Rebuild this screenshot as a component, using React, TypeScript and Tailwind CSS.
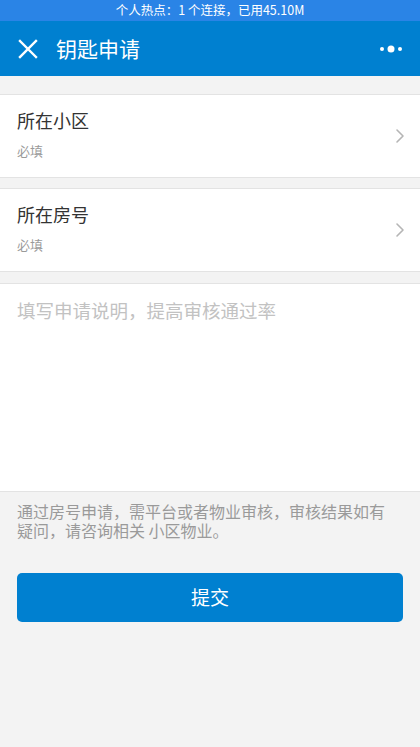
import React from 'react';

const font = '"Noto Sans CJK SC", Roboto, "Liberation Sans", sans-serif';

const Chevron = () => (
  <svg width="10" height="16" viewBox="0 0 10 16" fill="none">
    <path d="M2 2l6 6-6 6" stroke="#b5b5b5" strokeWidth="1.6" strokeLinecap="round" strokeLinejoin="round" />
  </svg>
);

const PickRow = ({ title }: { title: string }) => (
  <div className="flex items-center bg-white border-y border-[#e3e3e3] h-[84px] pl-[17px] pr-[15px]">
    <div className="flex-1 -mt-[4px]">
      <div className="text-[18px] leading-[24px] text-[#333]">{title}</div>
      <div className="mt-[10px] text-[13px] leading-[18px] text-[#9a9a9a]">必填</div>
    </div>
    <Chevron />
  </div>
);

export default function App() {
  return (
    <div className="w-[420px] h-[747px] bg-[#f3f3f3] flex flex-col" style={{ fontFamily: font }}>
      {/* status bar */}
      <div className="h-[21px] bg-[#2a84e6] flex items-center justify-center text-white text-[12.5px]">
        个人热点：1 个连接，已用45.10M
      </div>

      {/* header */}
      <div className="h-[55px] bg-[#0080d0] flex items-center pl-[18px] pr-[17px] text-white">
        <svg width="20" height="20" viewBox="0 0 20 20">
          <path d="M2 2l16 16M18 2L2 18" stroke="white" strokeWidth="2.4" strokeLinecap="square" />
        </svg>
        <div className="ml-[18px] text-[21px] flex-1">钥匙申请</div>
        <svg width="24" height="10" viewBox="0 0 24 10">
          <circle cx="3" cy="5" r="2" fill="white" />
          <circle cx="12" cy="5" r="3.5" fill="white" />
          <circle cx="21" cy="5" r="2" fill="white" />
        </svg>
      </div>

      <div className="mt-[18px]">
        <PickRow title="所在小区" />
      </div>
      <div className="mt-[10px]">
        <PickRow title="所在房号" />
      </div>

      {/* textarea */}
      <div className="mt-[11px] bg-white border-y border-[#e3e3e3] h-[209px] px-[17px] pt-[13px]">
        <textarea
          className="w-full h-full resize-none outline-none text-[18.5px] leading-[27px] text-[#333] placeholder:text-[#c2c2c2]"
          placeholder="填写申请说明，提高审核通过率"
          style={{ fontFamily: font }}
        />
      </div>

      <p className="pl-[17px] pr-[22px] pt-[10px] text-[16px] leading-[19px] text-[#9a9a9a]">
        通过房号申请，需平台或者物业审核，审核结果如有疑问，请咨询相关 小区物业。
      </p>

      <div className="px-[17px] mt-[33px]">
        <button className="w-full h-[49px] rounded-[5px] bg-[#0080d0] text-white text-[19px]" style={{ fontFamily: font }}>
          提交
        </button>
      </div>
    </div>
  );
}
